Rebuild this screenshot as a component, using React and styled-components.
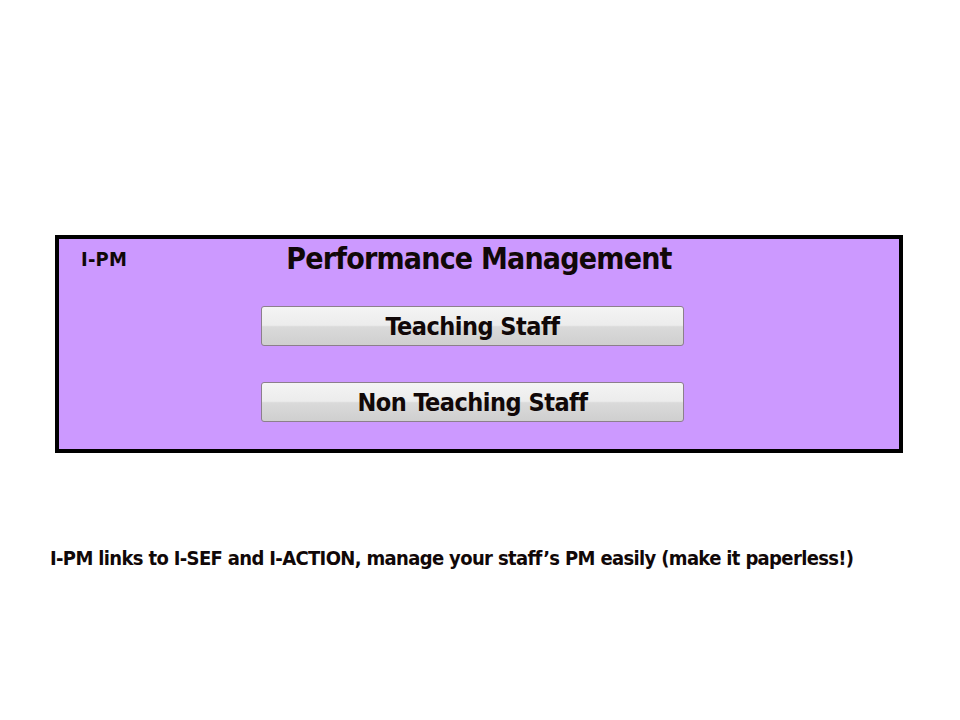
import React from 'react';
import styled, { createGlobalStyle } from 'styled-components';

const GlobalStyle = createGlobalStyle`
  html, body {
    margin: 0;
    padding: 0;
    background: #fff;
  }
  body {
    font-family: "DejaVu Sans Condensed", "DejaVu Sans", Tahoma, sans-serif;
    color: #110808;
  }
`;

const Page = styled.div`
  width: 960px;
  height: 720px;
  box-sizing: border-box;
  padding: 235px 0 0 55px;
`;

const Panel = styled.div`
  width: 848px;
  height: 218px;
  box-sizing: border-box;
  border: 4px solid #000;
  background: #cc99ff;
  display: flex;
  flex-direction: column;
`;

const Header = styled.div`
  display: grid;
  grid-template-columns: 1fr auto 1fr;
  align-items: center;
  height: 38px;
`;

const Tag = styled.div`
  font-weight: bold;
  font-size: 20px;
  letter-spacing: 0.2px;
  padding-left: 22px;
  margin-top: 2px;
`;

const Title = styled.h1`
  margin: 0;
  font-size: 30px;
  letter-spacing: -0.8px;
  font-weight: bold;
  white-space: nowrap;
`;

const Buttons = styled.div`
  display: flex;
  flex-direction: column;
  gap: 36px;
  padding: 29px 0 0 202px;
`;

const StaffButton = styled.button`
  width: 423px;
  height: 40px;
  box-sizing: border-box;
  border: 1px solid #8c7f8c;
  border-radius: 3px;
  background: linear-gradient(
    to bottom,
    #f4f4f4 0%,
    #ececec 48%,
    #dadada 52%,
    #cfcfcf 100%
  );
  font-family: inherit;
  font-weight: bold;
  font-size: 25px;
  letter-spacing: -0.5px;
  color: #110808;
  padding: 0;
  cursor: pointer;
`;

const Caption = styled.p`
  margin: 93px 0 0 -5px;
  font-weight: bold;
  font-size: 20px;
  letter-spacing: -0.65px;
  white-space: nowrap;
`;

export default function App() {
  return (
    <>
      <GlobalStyle />
      <Page>
        <Panel>
          <Header>
            <Tag>I-PM</Tag>
            <Title>Performance Management</Title>
            <span />
          </Header>
          <Buttons>
            <StaffButton>Teaching Staff</StaffButton>
            <StaffButton>Non Teaching Staff</StaffButton>
          </Buttons>
        </Panel>
        <Caption>I-PM links to I-SEF and I-ACTION, manage your staff’s PM easily (make it paperless!)</Caption>
      </Page>
    </>
  );
}
